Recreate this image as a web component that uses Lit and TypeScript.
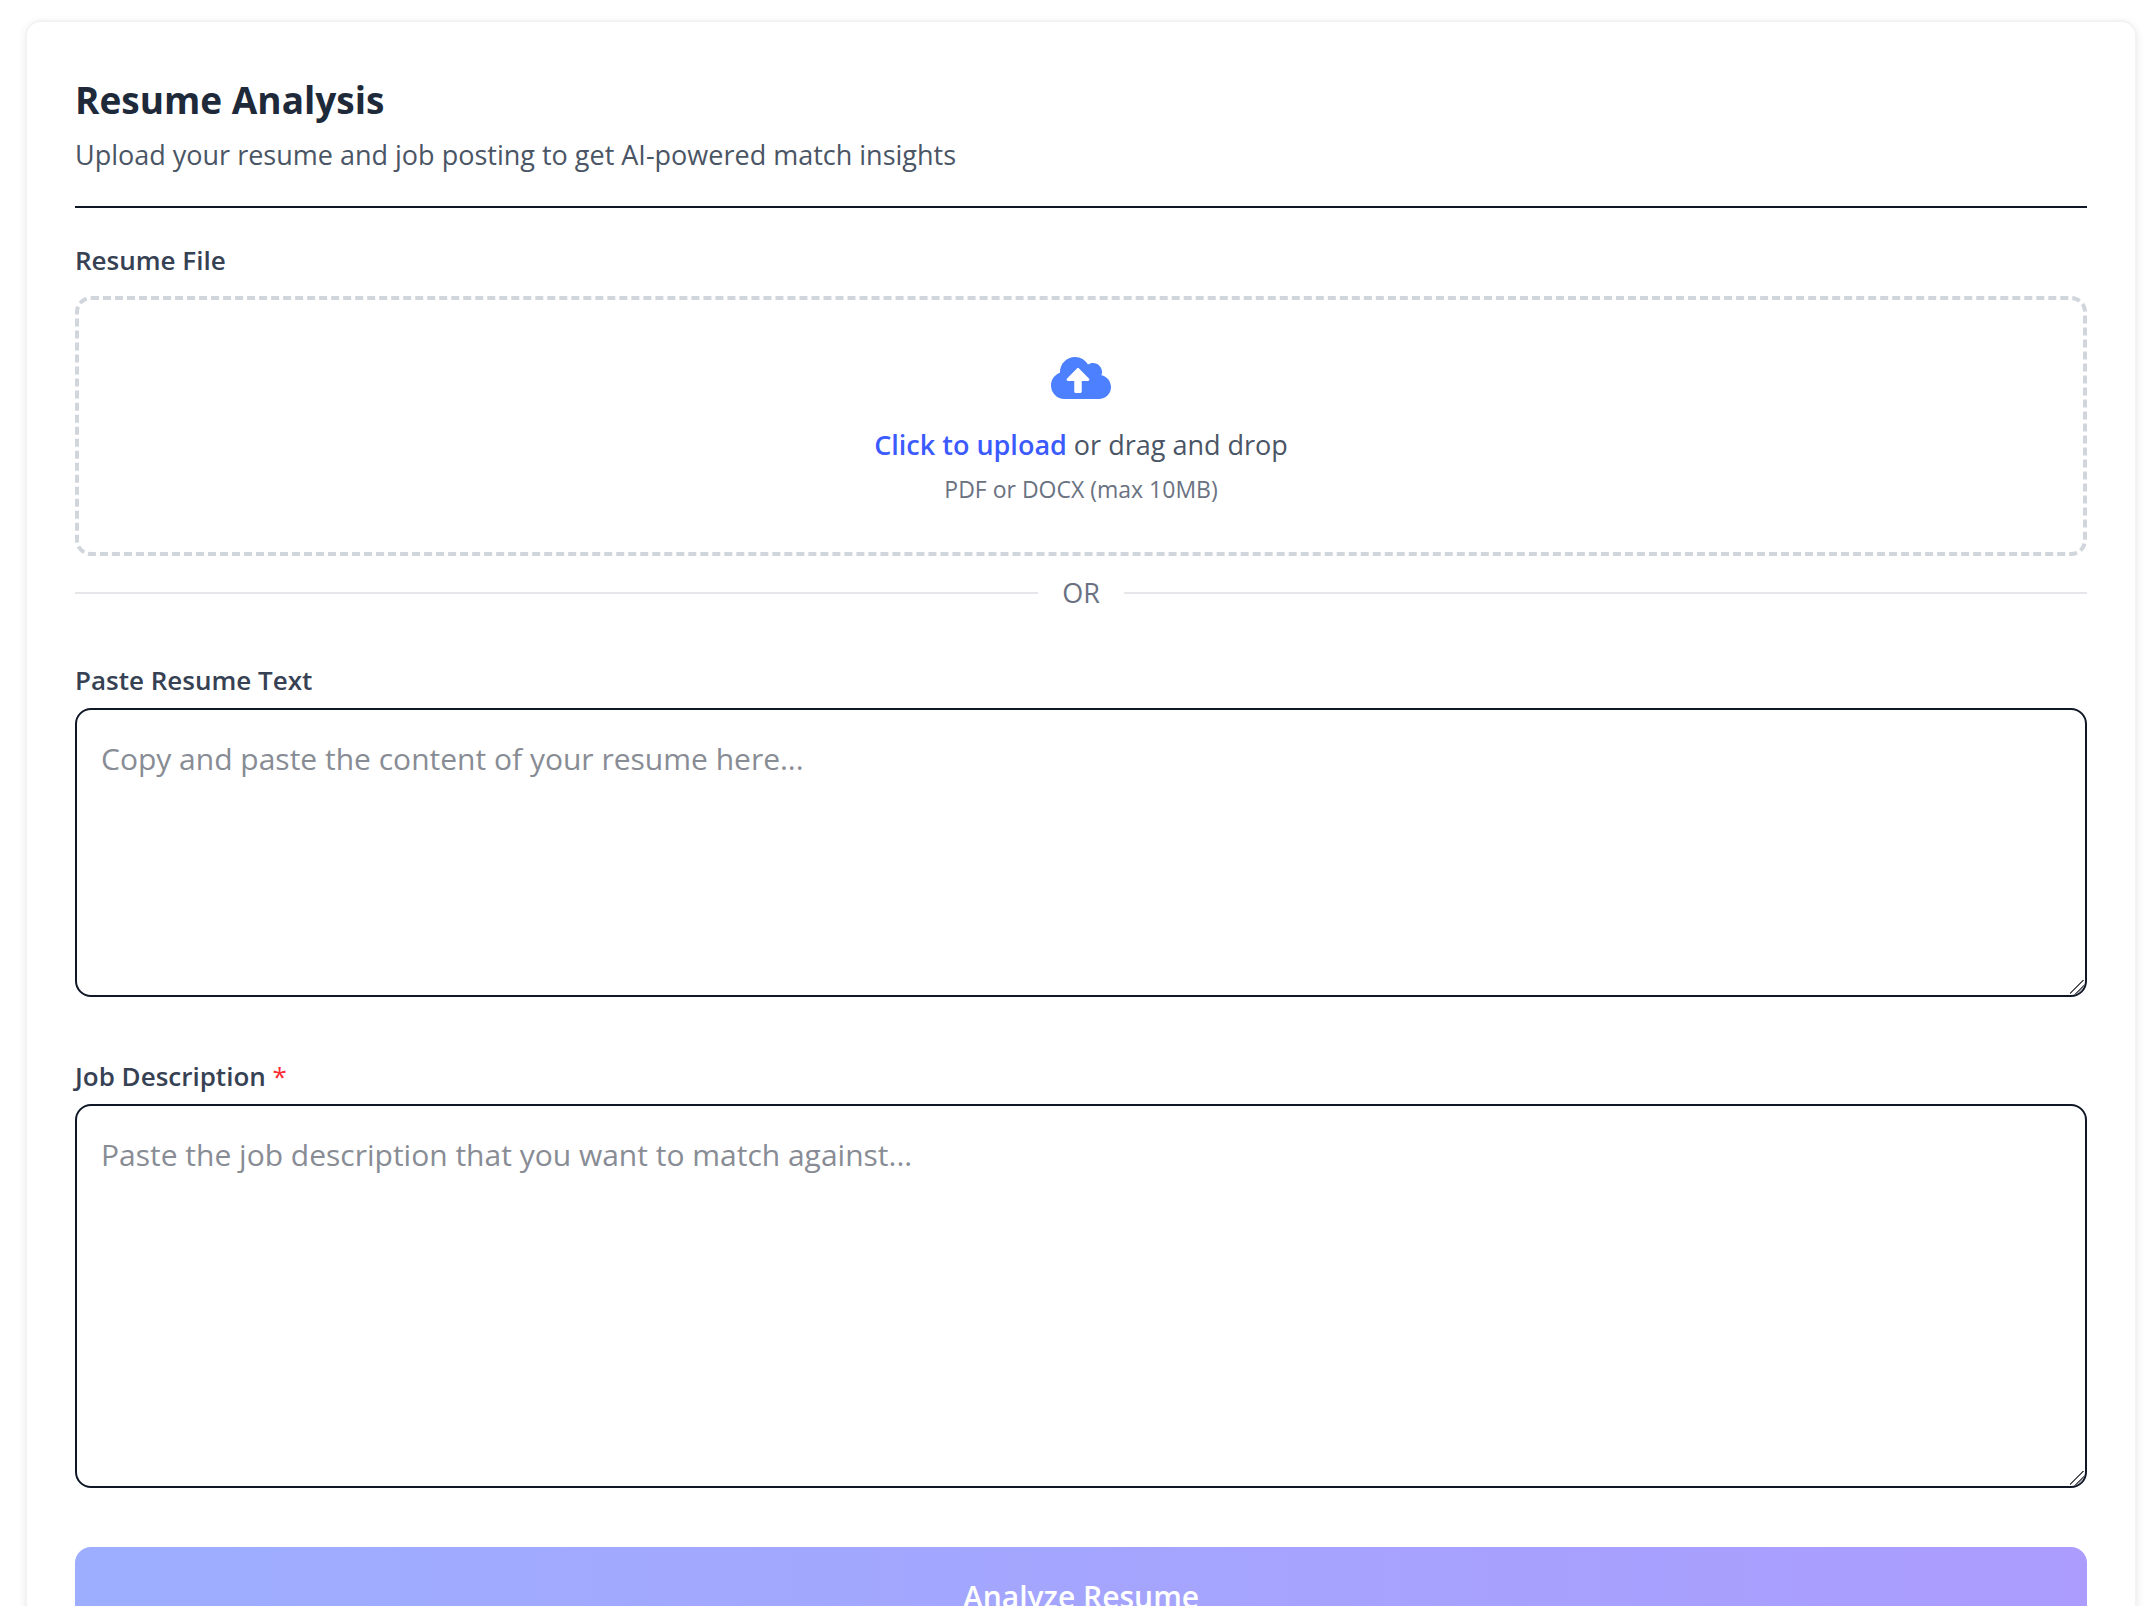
import { LitElement, html, css } from "lit";
import { customElement, state } from "lit/decorators.js";

@customElement("app-root")
export class AppRoot extends LitElement {
  static styles = css`
    :host {
      display: block;
      box-sizing: border-box;
      padding: 20px 15px 20px 25px;
      background: #fff;
      font-family: "Segoe UI", "Open Sans", "Noto Sans", sans-serif;
      font-size: 27px;
      line-height: 42px;
      color: #364153;
    }
    * {
      box-sizing: border-box;
    }
    .card {
      display: flex;
      flex-direction: column;
      padding: 48px;
      border: 2px solid #f3f3f4;
      border-radius: 16px;
      background: #fff;
      box-shadow: 0 2px 8px rgba(0, 0, 0, 0.08);
    }
    .header {
      padding-bottom: 30px;
      margin-bottom: 31px;
      border-bottom: 2px solid #101828;
    }
    .title {
      margin: 0 0 4px;
      font-size: 37px;
      line-height: 60px;
      font-weight: 700;
      color: #1e2939;
    }
    .subtitle {
      margin: 0;
      color: #4a5565;
    }
    .label {
      font-weight: 600;
      font-size: 26px;
    }
    .required {
      color: #fb2c36;
      font-weight: 400;
    }
    .field {
      display: flex;
      flex-direction: column;
      gap: 7px;
    }
    .upload {
      gap: 15px;
    }
    .dropzone {
      position: relative;
      display: flex;
      flex-direction: column;
      align-items: center;
      padding: 54px 24px 44px;
      border: 4px dashed #d1d5dc;
      border-radius: 16px;
      color: #4a5565;
    }
    .file {
      position: absolute;
      inset: 0;
      width: 100%;
      height: 100%;
      opacity: 0;
      cursor: pointer;
    }
    .cloud {
      width: 60px;
      height: 48px;
      margin-bottom: 22px;
      fill: #4d80ff;
    }
    .prompt,
    .hint {
      margin: 0;
    }
    .action {
      font-weight: 600;
      color: #3b5bff;
    }
    .hint {
      margin-top: 4px;
      font-size: 23px;
      line-height: 38px;
      color: #6a7282;
    }
    .divider {
      display: flex;
      align-items: center;
      gap: 24px;
      margin: 16px 0 46px;
      line-height: 41px;
      color: #6a7282;
    }
    .rule {
      flex: 1;
      height: 2px;
      background: #e5e7eb;
    }
    .area {
      display: block;
      width: 100%;
      margin: 0;
      padding: 24px;
      border: 2px solid #101828;
      border-radius: 16px;
      background: #fff;
      color: #101828;
      font: inherit;
      font-size: 30px;
      line-height: 50px;
      resize: vertical;
    }
    .area::placeholder {
      color: #888c94;
      opacity: 1;
    }
    .area::-webkit-resizer {
      border-bottom-right-radius: 14px;
      background: linear-gradient(
        135deg,
        transparent 9px,
        #55565c 9px,
        #55565c 10px,
        transparent 10px,
        transparent 13px,
        #55565c 13px,
        #55565c 14px,
        #c4c4ca 15px
      );
    }
    .resume {
      height: 289px;
      margin-bottom: 58px;
    }
    .job {
      height: 384px;
      margin-bottom: 59px;
    }
    .submit {
      width: 100%;
      padding: 24px;
      border: 0;
      border-radius: 16px;
      background: linear-gradient(to right, #9daeff, #ab9cfd);
      color: #fff;
      font: inherit;
      font-size: 30px;
      line-height: 52px;
      font-weight: 600;
    }
  `;

  @state() private fileName = "";

  private onFile(event: Event) {
    const input = event.target as HTMLInputElement;
    this.fileName = input.files?.[0]?.name ?? "";
  }

  render() {
    return html`
      <main class="card">
        <header class="header">
          <h1 class="title">Resume Analysis</h1>
          <p class="subtitle">Upload your resume and job posting to get AI-powered match insights</p>
        </header>

        <div class="field upload">
          <label class="label" for="file">Resume File</label>
          <div class="dropzone">
            <svg class="cloud" viewBox="0 0 640 512" aria-hidden="true">
              <path
                d="M537.6 226.6c4.1-10.7 6.4-22.4 6.4-34.6 0-53-43-96-96-96-19.7 0-38.1 6-53.3 16.2C367 64.2 315.3 32 256 32c-88.4 0-160 71.6-160 160 0 2.7.1 5.4.2 8.1C40.2 219.8 0 273.2 0 336c0 79.5 64.5 144 144 144h368c70.7 0 128-57.3 128-128 0-61.9-44-113.6-102.4-125.4zM393.4 288H328v112c0 8.8-7.2 16-16 16h-48c-8.8 0-16-7.2-16-16V288h-65.4c-14.3 0-21.4-17.2-11.3-27.3l105.4-105.4c6.2-6.2 16.4-6.2 22.6 0l105.4 105.4c10.1 10.1 2.9 27.3-11.3 27.3z"
              />
            </svg>
            <p class="prompt">
              ${this.fileName || html`<span class="action">Click to upload</span> or drag and drop`}
            </p>
            <p class="hint">PDF or DOCX (max 10MB)</p>
            <input class="file" id="file" type="file" accept=".pdf,.docx" @change=${this.onFile} />
          </div>
        </div>

        <div class="divider"><span class="rule"></span><span>OR</span><span class="rule"></span></div>

        <div class="field">
          <label class="label" for="resume">Paste Resume Text</label>
          <textarea class="area resume" id="resume" placeholder="Copy and paste the content of your resume here..."></textarea>
        </div>

        <div class="field">
          <label class="label" for="job">Job Description <span class="required">*</span></label>
          <textarea class="area job" id="job" required placeholder="Paste the job description that you want to match against..."></textarea>
        </div>

        <button class="submit" type="button">Analyze Resume</button>
      </main>
    `;
  }
}
